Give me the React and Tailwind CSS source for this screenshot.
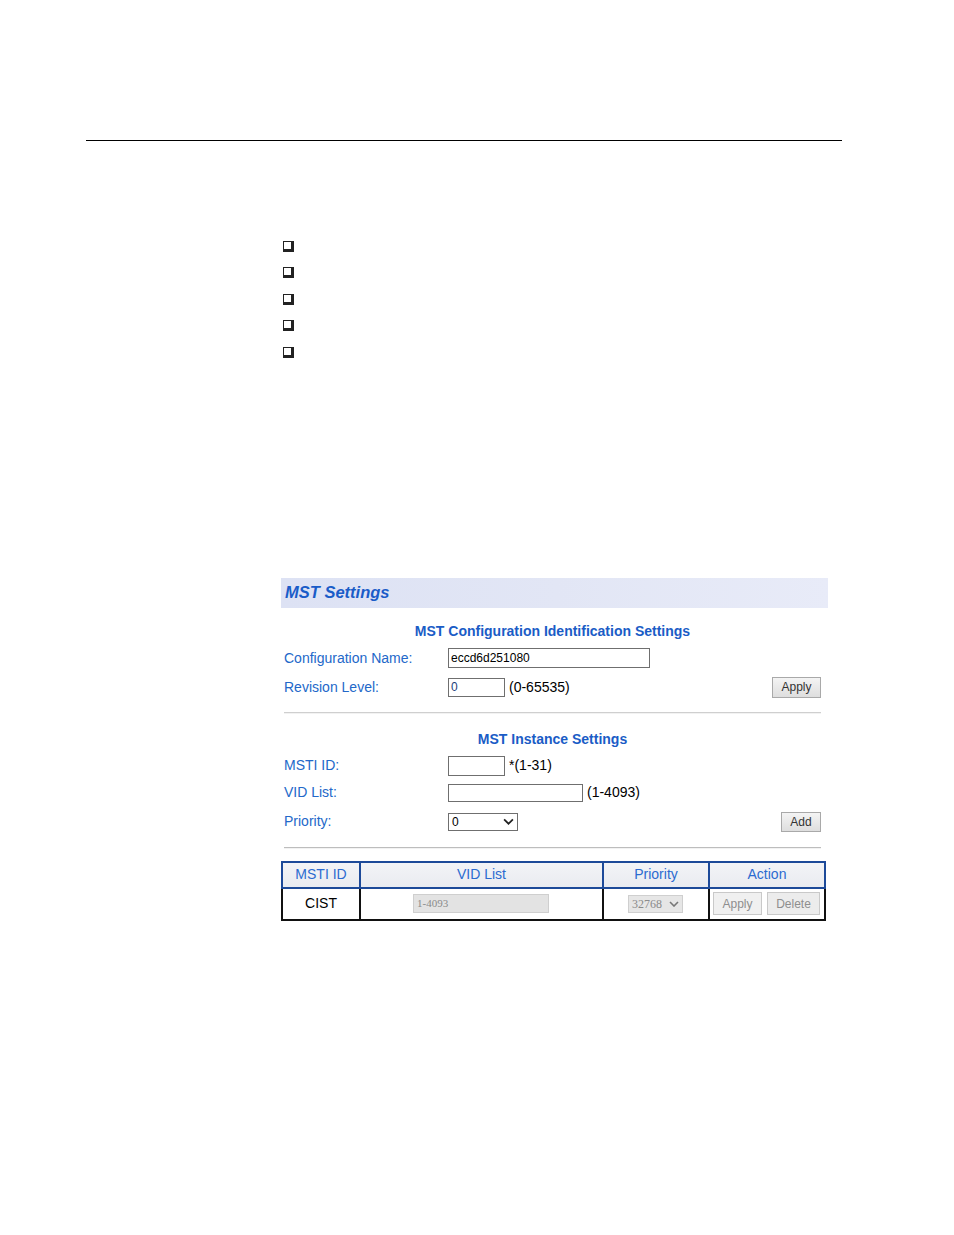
import React from 'react';

const sans = { fontFamily: '"Liberation Sans", Arial, sans-serif' };

function Chevron({ className = '' }) {
  return (
    <svg viewBox="0 0 10 6" className={className} fill="none" stroke="currentColor" strokeWidth="1.6">
      <path d="M1 1l4 4 4-4" />
    </svg>
  );
}

function Bullet() {
  return (
    <div className="h-[26.5px] flex items-center">
      <span className="block w-[11px] h-[11px] border border-[#222] border-r-[3px] border-b-[3px]" />
    </div>
  );
}

function Label({ children }) {
  return <div className="w-[164px] shrink-0 text-[14px] text-[#2368c9]">{children}</div>;
}

function Button({ children, className = '' }) {
  return (
    <div className={`flex items-center justify-center border border-[#a9a9a9] bg-gradient-to-b from-[#f4f4f4] to-[#dedede] text-[12px] text-[#333] ${className}`}>
      {children}
    </div>
  );
}

export default function App() {
  return (
    <div className="min-h-[1235px] w-[954px] bg-white" style={sans}>
      <div className="pt-[140px]">
        <div className="ml-[86px] w-[756px] h-px bg-black" />
      </div>

      {/* bullets */}
      <div className="ml-[283px] mt-[92px] flex flex-col">
        <Bullet />
        <Bullet />
        <Bullet />
        <Bullet />
        <Bullet />
      </div>

      {/* MST Settings panel */}
      <div className="ml-[281px] mt-[212px] w-[547px]">
        <div className="h-[30px] flex items-center pl-[4px] bg-gradient-to-r from-[#dde2f4] via-[#e2e6f5] to-[#e8ebf8]">
          <span className="text-[16.5px] font-bold italic text-[#1a5cc8]">MST Settings</span>
        </div>

        <div className="ml-[3px] w-[537px]">
          <div className="mt-[14px] h-[20px] flex items-center justify-center text-[14px] font-bold text-[#1a5cc6]">
            MST Configuration Identification Settings
          </div>

          <div className="mt-[6px] h-[21px] flex items-center">
            <Label>Configuration Name:</Label>
            <div className="w-[202px] h-[20px] border border-[#6f6f6f] flex items-center px-[2px] text-[12px] text-black">
              eccd6d251080
            </div>
          </div>

          <div className="mt-[8px] h-[21px] flex items-center">
            <Label>Revision Level:</Label>
            <div className="w-[57px] h-[19px] border border-[#6f6f6f] flex items-center px-[2px] text-[12px] text-[#1d3f7a]">0</div>
            <span className="ml-[4px] text-[14px] text-black">(0-65535)</span>
            <Button className="ml-auto w-[49px] h-[21px]">Apply</Button>
          </div>

          <div className="mt-[14px] h-[2px] border-t border-[#cfcfcf] bg-[#f2f2f2]" />

          <div className="mt-[16px] h-[20px] flex items-center justify-center text-[14px] font-bold text-[#1a5cc6]">
            MST Instance Settings
          </div>

          <div className="mt-[6px] h-[20px] flex items-center">
            <Label>MSTI ID:</Label>
            <div className="w-[57px] h-[20px] border border-[#6f6f6f]" />
            <span className="ml-[4px] text-[14px] text-black">*(1-31)</span>
          </div>

          <div className="mt-[7px] h-[20px] flex items-center">
            <Label>VID List:</Label>
            <div className="w-[135px] h-[18px] border border-[#6f6f6f]" />
            <span className="ml-[4px] text-[14px] text-black">(1-4093)</span>
          </div>

          <div className="mt-[9px] h-[20px] flex items-center">
            <Label>Priority:</Label>
            <div className="w-[70px] h-[18px] border border-[#6f6f6f] flex items-center justify-between px-[3px] text-[12px] text-black">
              <span>0</span>
              <Chevron className="w-[11px] h-[7px] text-[#222]" />
            </div>
            <Button className="ml-auto w-[40px] h-[20px]">Add</Button>
          </div>

          <div className="mt-[15px] h-[2px] border-t border-[#bdbdbd] bg-[#f2f2f2]" />
        </div>

        {/* instance table */}
        <table className="mt-[12px] w-[543px] table-fixed border-collapse border-2 border-[#14213f] text-[14px]">
          <colgroup>
            <col className="w-[78px]" />
            <col className="w-[243px]" />
            <col className="w-[106px]" />
            <col className="w-[116px]" />
          </colgroup>
          <thead>
            <tr className="h-[26px] bg-gradient-to-b from-[#f3f4f7] to-[#e9ebf0] text-[#2b6bd0]">
              <th className="font-normal border-2 border-[#1d4a99]">MSTI ID</th>
              <th className="font-normal border-2 border-[#1d4a99]">VID List</th>
              <th className="font-normal border-2 border-[#1d4a99]">Priority</th>
              <th className="font-normal border-2 border-[#1d4a99]">Action</th>
            </tr>
          </thead>
          <tbody>
            <tr className="h-[32px]">
              <td className="border-2 border-[#111] text-center text-black">CIST</td>
              <td className="border-2 border-[#111]">
                <div className="ml-[52px] w-[136px] h-[19px] border border-[#cfcfcf] bg-[#e3e3e3] flex items-center px-[3px] text-[11px] text-[#8a8a8a]" style={{ fontFamily: '"Liberation Serif", serif' }}>
                  1-4093
                </div>
              </td>
              <td className="border-2 border-[#111]">
                <div className="ml-[24px] w-[55px] h-[18px] border border-[#cfcfcf] bg-[#e6e6e6] flex items-center justify-between px-[3px] text-[12px] text-[#8a8a8a]" style={{ fontFamily: '"Liberation Serif", serif' }}>
                  <span>32768</span>
                  <Chevron className="w-[10px] h-[6px] text-[#777]" />
                </div>
              </td>
              <td className="border-2 border-[#111]">
                <div className="flex items-center gap-[5px] pl-[3px]">
                  <div className="w-[49px] h-[23px] border border-[#c9c9c9] bg-[#f0f0f0] flex items-center justify-center text-[12px] text-[#8e8e8e]">Apply</div>
                  <div className="w-[53px] h-[23px] border border-[#c9c9c9] bg-[#ececec] flex items-center justify-center text-[12px] text-[#8e8e8e]">Delete</div>
                </div>
              </td>
            </tr>
          </tbody>
        </table>
      </div>
    </div>
  );
}
